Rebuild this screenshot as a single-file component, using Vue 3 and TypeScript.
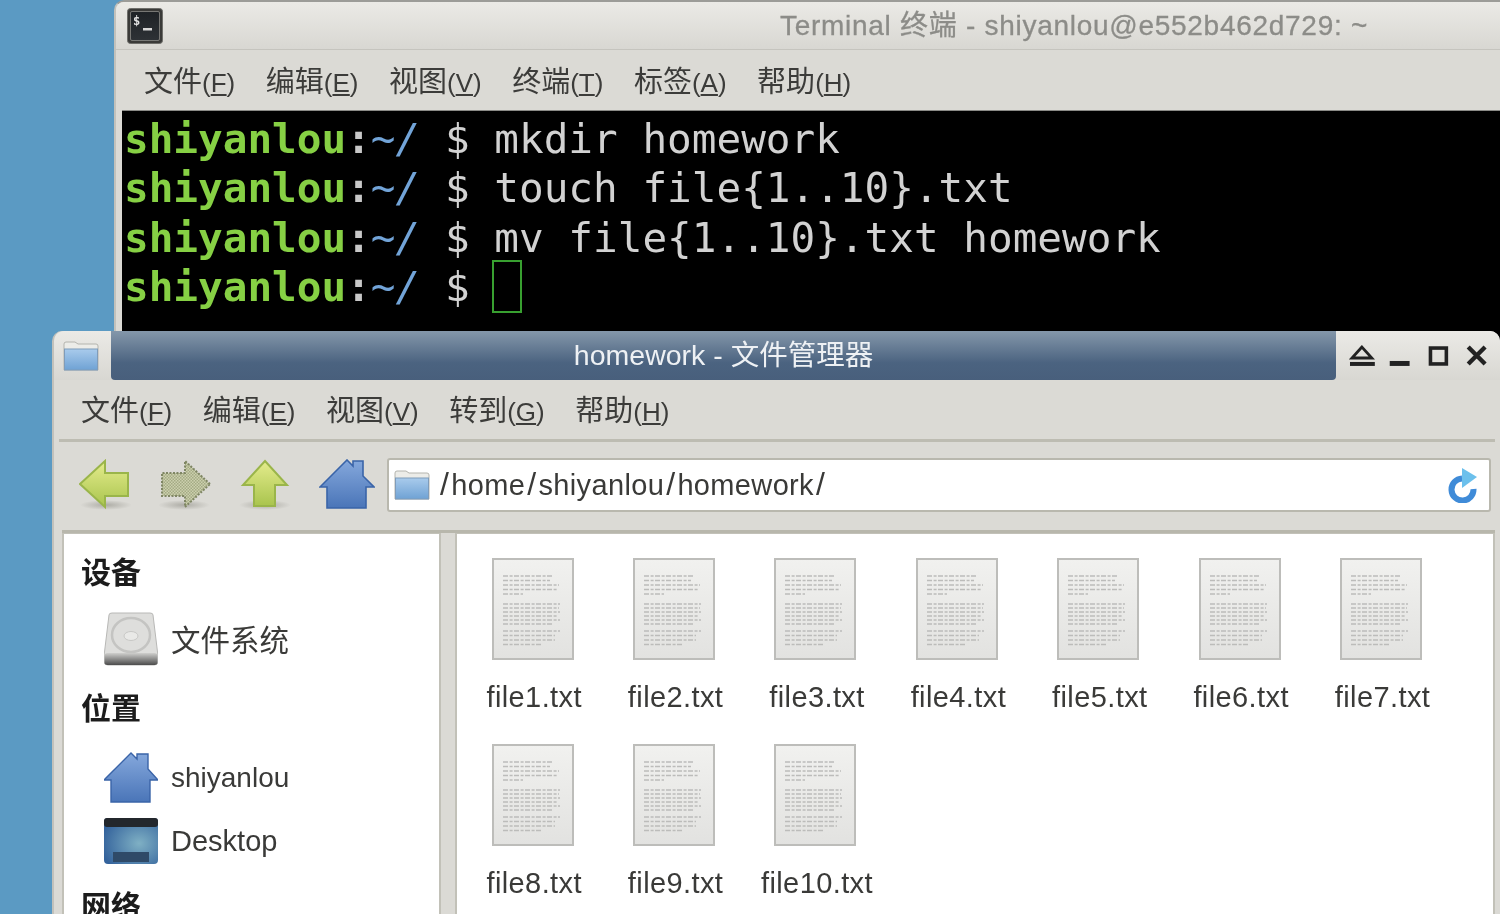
<script setup lang="ts">
interface MenuItem { label: string; key: string }

const termMenu: MenuItem[] = [
  { label: '文件', key: 'F' },
  { label: '编辑', key: 'E' },
  { label: '视图', key: 'V' },
  { label: '终端', key: 'T' },
  { label: '标签', key: 'A' },
  { label: '帮助', key: 'H' },
]
const fmMenu: MenuItem[] = [
  { label: '文件', key: 'F' },
  { label: '编辑', key: 'E' },
  { label: '视图', key: 'V' },
  { label: '转到', key: 'G' },
  { label: '帮助', key: 'H' },
]
const commands = ['mkdir homework', 'touch file{1..10}.txt', 'mv file{1..10}.txt homework', '']
const pathParts = ['home', 'shiyanlou', 'homework']
const files = Array.from({ length: 10 }, (_, i) => `file${i + 1}.txt`)
const docLines: { y: number; w: number }[] = [
  { y: 18, w: 49 }, { y: 22.5, w: 47 }, { y: 27, w: 56 }, { y: 31.5, w: 54 }, { y: 36, w: 20 },
  { y: 46, w: 57 }, { y: 50, w: 56 }, { y: 54, w: 57 }, { y: 58, w: 54 }, { y: 62, w: 57 }, { y: 66, w: 50 },
  { y: 73, w: 57 }, { y: 77.5, w: 52 }, { y: 82, w: 52 }, { y: 86.5, w: 38 },
]
</script>

<template>
  <div class="screen">
    <div class="desktop">
      <section class="window terminal">
        <header class="term-title">
          <div class="term-icon">
            <svg viewBox="0 0 36 36" width="36" height="36">
              <rect x="0.5" y="0.5" width="35" height="35" rx="3" fill="#3a3a38" stroke="#6e6e6a" />
              <rect x="3.5" y="3.5" width="29" height="29" rx="1.5" fill="url(#termface)" stroke="#8a8a86" stroke-width="0.8" />
              <text x="6" y="17" font-family="DejaVu Sans Mono" font-size="12" font-weight="700" fill="#e4e4e4">$</text>
              <rect x="16" y="20" width="9" height="2.5" fill="#d8d8d8" />
            </svg>
          </div>
          <div class="term-caption">Terminal 终端 - shiyanlou@e552b462d729: ~</div>
          <div></div>
        </header>
        <nav class="menubar term-menu">
          <span v-for="m in termMenu" :key="m.label" class="menu-item">{{ m.label }}<span class="menu-key">(<u>{{ m.key }}</u>)</span></span>
        </nav>
        <div class="term-body">
          <div v-for="(c, i) in commands" :key="i" class="term-line">
            <span class="p-user">shiyanlou</span><span class="p-colon">:</span><span class="p-path">~/</span><span class="p-cmd"> $ {{ c }}</span><span v-if="i === 3" class="cursor"></span>
          </div>
        </div>
      </section>

      <section class="window fm">
        <header class="fm-title">
          <div class="fm-icon">
            <svg viewBox="0 0 36 30" width="36" height="30">
              <path d="M1 3 Q1 1 3 1 L12 1 L15 3 L33 3 Q35 3 35 5 L35 29 L1 29 Z" fill="#ecece8" stroke="#b4b4ae" />
              <rect x="1.5" y="8" width="33" height="21" fill="url(#folder)" stroke="#7f9cba" />
            </svg>
          </div>
          <div class="fm-caption">homework - 文件管理器</div>
          <div class="fm-btns">
            <svg viewBox="0 0 152 30" width="152" height="30">
              <path d="M13 6 L3 17 L23 17 Z" fill="none" stroke="#222" stroke-width="2.8" />
              <rect x="1" y="21" width="25" height="4" fill="#222" />
              <rect x="41" y="20" width="20" height="5" fill="#222" />
              <rect x="82" y="7" width="16" height="16" fill="none" stroke="#222" stroke-width="3.6" />
              <path d="M120 6 L137 23 M137 6 L120 23" stroke="#222" stroke-width="4.4" />
            </svg>
          </div>
        </header>
        <nav class="menubar fm-menu">
          <span v-for="m in fmMenu" :key="m.label" class="menu-item">{{ m.label }}<span class="menu-key">(<u>{{ m.key }}</u>)</span></span>
        </nav>
        <div class="toolbar">
          <svg class="tool" viewBox="0 0 52 52" width="52" height="52">
            <ellipse cx="27" cy="46" rx="26" ry="5" fill="url(#shade)" />
            <path d="M1 25 L26 2 L26 14 L49 14 L49 37 L26 37 L26 48 Z" fill="url(#lime)" stroke="#9ab54a" stroke-width="2" />
          </svg>
          <svg class="tool" viewBox="0 0 52 52" width="52" height="52">
            <ellipse cx="25" cy="46" rx="26" ry="5" fill="url(#shade)" />
            <path d="M51 25 L26 2 L26 14 L3 14 L3 37 L26 37 L26 48 Z" fill="url(#dither)" stroke="#7f8664" stroke-width="2" stroke-dasharray="2 1.5" />
          </svg>
          <svg class="tool" viewBox="0 0 52 52" width="52" height="52">
            <ellipse cx="26" cy="46" rx="26" ry="5" fill="url(#shade)" />
            <path d="M26 2 L48 26 L36 26 L36 47 L15 47 L15 26 L4 26 Z" fill="url(#lime)" stroke="#9ab54a" stroke-width="2" />
          </svg>
          <svg class="tool" viewBox="0 0 56 52" width="56" height="52">
            <path d="M1 28 L28 1 L34 7 L34 2 L44 2 L44 17 L55 28 L47 28 L47 49 L8 49 L8 28 Z" fill="url(#house)" stroke="#3a64a8" stroke-width="1.6" />
          </svg>
          <div class="location">
            <svg viewBox="0 0 36 30" width="36" height="30">
              <path d="M1 3 Q1 1 3 1 L12 1 L15 3 L33 3 Q35 3 35 5 L35 29 L1 29 Z" fill="#ecece8" stroke="#b4b4ae" />
              <rect x="1.5" y="8" width="33" height="21" fill="url(#folder)" stroke="#7f9cba" />
            </svg>
            <span class="path"><i class="slash">/</i><template v-for="p in pathParts" :key="p">{{ p }}<i class="slash">/</i></template></span>
            <svg class="reload" viewBox="0 0 32 36" width="32" height="36">
              <path d="M26.5 22 A11 11 0 1 1 15 11.5" fill="none" stroke="#3f8bd8" stroke-width="6" />
              <path d="M15 1 L30 10 L15 21 Z" fill="#6cc0ec" />
            </svg>
          </div>
        </div>
        <div class="panes">
          <aside class="sidebar">
            <h3>设备</h3>
            <div class="side-row fs-row">
              <svg viewBox="0 0 54 54" width="54" height="54">
                <path d="M5 3 Q5 1 8 1 L46 1 Q49 1 49 3 L54 44 L54 50 Q54 53 50 53 L4 53 Q0 53 0 50 L0 44 Z" fill="#dededc" stroke="#b8b8b6" />
                <rect x="0.5" y="41" width="53" height="12" rx="3" fill="url(#hdd)" />
                <ellipse cx="27" cy="23" rx="19" ry="17" fill="none" stroke="#c4c4c2" stroke-width="2.5" />
                <ellipse cx="27" cy="24" rx="7" ry="4.5" fill="#e9e9e7" stroke="#c8c8c6" />
              </svg>
              <span class="cjk">文件系统</span>
            </div>
            <h3 class="places">位置</h3>
            <div class="side-row home-row">
              <svg viewBox="0 0 54 52" width="54" height="52">
                <path d="M0 28 L27 1 L33 7 L33 2 L44 2 L44 17 L54 28 L46 28 L46 50 L7 50 L7 28 Z" fill="url(#house)" stroke="#3a64a8" stroke-width="1.4" />
              </svg>
              <span>shiyanlou</span>
            </div>
            <div class="side-row desk-row">
              <svg viewBox="0 0 54 46" width="54" height="46">
                <rect width="54" height="46" rx="4" fill="url(#desk)" />
                <rect width="54" height="9" rx="3" fill="#23272c" />
                <rect x="9" y="34" width="36" height="10" fill="#2f4a68" />
              </svg>
              <span class="wide">Desktop</span>
            </div>
            <h3 class="net">网络</h3>
          </aside>
          <div class="pane-handle"></div>
          <main class="files">
            <div v-for="f in files" :key="f" class="file">
              <svg viewBox="0 0 82 102" width="82" height="102">
                <rect x="1" y="1" width="80" height="100" fill="url(#paper)" stroke="#bdbdba" stroke-width="2" />
                <line v-for="(l, i) in docLines" :key="i" x1="11" :y1="l.y" :x2="11 + l.w" :y2="l.y" stroke="#bcbcba" stroke-width="1.5" stroke-dasharray="5 1.6 3 1.4" />
              </svg>
              <span class="file-name">{{ f }}</span>
            </div>
          </main>
        </div>
      </section>

      <svg class="defs" width="0" height="0">
        <defs>
          <linearGradient id="lime" x1="0" y1="0" x2="0" y2="1">
            <stop offset="0" stop-color="#e4ec8c" />
            <stop offset="1" stop-color="#a9c44e" />
          </linearGradient>
          <linearGradient id="termface" x1="0" y1="0" x2="0" y2="1">
            <stop offset="0" stop-color="#1e2226" />
            <stop offset="1" stop-color="#2e3236" />
          </linearGradient>
          <linearGradient id="folder" x1="0" y1="0" x2="0" y2="1">
            <stop offset="0" stop-color="#a9cbec" />
            <stop offset="1" stop-color="#6fa2d4" />
          </linearGradient>
          <radialGradient id="shade">
            <stop offset="0" stop-color="#a8a7a0" stop-opacity=".9" />
            <stop offset="1" stop-color="#a8a7a0" stop-opacity="0" />
          </radialGradient>
          <pattern id="dither" width="3" height="3" patternUnits="userSpaceOnUse">
            <rect width="3" height="3" fill="#ccd0ae" />
            <rect width="1.5" height="1.5" fill="#a4ab84" />
            <rect x="1.5" y="1.5" width="1.5" height="1.5" fill="#a4ab84" />
          </pattern>
          <linearGradient id="house" x1="0" y1="0" x2="0" y2="1">
            <stop offset="0" stop-color="#85a8dc" />
            <stop offset="1" stop-color="#4a75b8" />
          </linearGradient>
          <linearGradient id="hdd" x1="0" y1="0" x2="0" y2="1">
            <stop offset="0" stop-color="#cfcfcd" />
            <stop offset="1" stop-color="#4c4c4c" />
          </linearGradient>
          <radialGradient id="desk" cx=".65" cy=".55" r=".7">
            <stop offset="0" stop-color="#7fb0c4" />
            <stop offset="1" stop-color="#34639c" />
          </radialGradient>
          <linearGradient id="paper" x1="0" y1="0" x2="0" y2="1">
            <stop offset="0" stop-color="#f1f1ef" />
            <stop offset="1" stop-color="#e2e2e0" />
          </linearGradient>
        </defs>
      </svg>
    </div>
  </div>
</template>

<style>
html, body { margin: 0; padding: 0; overflow: hidden; }
</style>

<style scoped>
.screen {
  width: 1500px;
  height: 914px;
  overflow: hidden;
}
.desktop {
  position: relative;
  width: 1520px;
  height: 934px;
  margin: -10px;
  overflow: hidden;
  background: #5b9ac3;
  font-family: "Liberation Sans", "Noto Sans CJK SC", sans-serif;
  filter: blur(0.75px);
}
.defs { position: absolute; }
.window {
  position: absolute;
  background: #dbdad5;
  box-sizing: border-box;
}
.terminal {
  left: 124px;
  top: 10px;
  width: 1918px;
  height: 340px;
  border-radius: 10px 0 0 0;
  border-top: 2px solid #9c9c98;
  border-left: 2px solid #c2c1bb;
  display: flex;
  flex-direction: column;
}
.term-title {
  height: 48px;
  flex: none;
  display: grid;
  grid-template-columns: 1fr auto 1fr;
  align-items: center;
  padding-left: 11px;
  padding-right: 11px;
  background: linear-gradient(#ebeae6, #d8d7d2);
  border-bottom: 1px solid #c5c4be;
  border-radius: 8px 0 0 0;
  box-sizing: border-box;
}
.term-icon { display: flex; }
.term-caption {
  font-size: 28px;
  color: #8c8c88;
  letter-spacing: 0.72px;
  white-space: nowrap;
  padding-bottom: 5px;
  -webkit-text-stroke: 0.3px #8c8c88;
}
.menubar {
  display: flex;
  flex: none;
  align-items: center;
  gap: 30.5px;
  font-size: 29px;
  color: #3c3c3a;
  padding-bottom: 3px;
}
.menu-item { white-space: nowrap; }
.menu-key { font-size: 26px; }
.term-menu { height: 60px; padding-left: 28px; box-sizing: border-box; }
.term-body {
  flex: 1;
  margin-left: 6px;
  background: #000;
  padding: 4px 0 0 2px;
  border-top: 1px solid #8a8a86;
  font-family: "DejaVu Sans Mono", monospace;
  font-size: 41px;
  line-height: 49.3px;
  color: #d2d2d2;
}
.term-line { display: flex; align-items: center; white-space: pre; height: 49.3px; }
.p-user { color: #86d044; font-weight: 700; }
.p-colon { color: #c8c8c8; font-weight: 700; }
.p-path { color: #72a4d8; font-style: italic; font-weight: 400; }
.cursor {
  display: block;
  flex: none;
  width: 30px;
  height: 53px;
  margin: -2px 0 0 -2px;
  border: 2px solid #38a030;
  box-sizing: border-box;
}

.fm {
  left: 62px;
  top: 341px;
  width: 1448px;
  height: 593px;
  border-radius: 10px 10px 0 0;
  border-left: 2px solid #c2c1bb;
  display: flex;
  flex-direction: column;
}
.fm-title {
  height: 49px;
  flex: none;
  display: flex;
  align-items: stretch;
  background: linear-gradient(#ebeae6, #d8d7d2);
  border-radius: 10px 10px 0 0;
}
.fm-icon { width: 57px; flex: none; display: flex; align-items: center; padding-left: 9px; box-sizing: border-box; }
.fm-caption {
  flex: 1;
  display: flex;
  align-items: center;
  justify-content: center;
  background: linear-gradient(#8497aa, #4b6380 65%, #485f7c);
  border-radius: 0 0 4px 4px;
  color: #eef1f4;
  font-size: 28.5px;
  padding-bottom: 6px;
  box-sizing: border-box;
}
.fm-btns { width: 164px; flex: none; display: flex; align-items: center; padding-left: 13px; box-sizing: border-box; }
.fm-menu {
  height: 62px;
  box-sizing: border-box;
  margin: 0 5px;
  padding-left: 22px;
  border-bottom: 3px solid #bdbcb2;
}
.toolbar {
  height: 86px;
  flex: none;
  display: flex;
  align-items: center;
  padding: 0 9px 0 25px;
  box-sizing: border-box;
}
.tool { flex: none; margin-right: 28px; }
.tool:nth-child(4) { margin-right: 12px; }
.location {
  flex: 1;
  height: 54px;
  display: flex;
  align-items: center;
  gap: 8px;
  padding: 0 10px 0 5px;
  background: #fff;
  border: 2px solid #b9b8ae;
  border-radius: 3px;
  box-sizing: border-box;
}
.path { flex: 1; font-size: 29px; letter-spacing: 0.35px; color: #3a3a38; white-space: nowrap; }
.slash { font-style: normal; font-size: 32px; line-height: 28px; margin: 0 2px; }
.reload { flex: none; }
.panes {
  flex: 1;
  display: flex;
  margin: 2px 5px 0 8px;
  border-top: 3px solid #b8b7ac;
  min-height: 0;
}
.sidebar {
  width: 379px;
  flex: none;
  background: #fff;
  border: 2px solid #c2c1b8;
  border-width: 1px 2px 0;
  padding: 21px 0 0 17px;
  box-sizing: border-box;
  color: #3a3a38;
}
.sidebar h3 {
  margin: 0;
  font-size: 30px;
  line-height: 36px;
  color: #1c1c1c;
  font-weight: 700;
}
.side-row { display: flex; align-items: center; gap: 13px; padding-left: 23px; font-size: 28px; }
.cjk { font-size: 29.5px; padding-bottom: 2px; }
.wide { font-size: 29px; }
.fs-row { margin-top: 21px; }
.sidebar .places { margin-top: 25px; }
.home-row { margin-top: 25px; }
.desk-row { margin-top: 14px; }
.sidebar .net { margin-top: 25px; }
.pane-handle { width: 14px; flex: none; }
.files {
  flex: 1;
  background: #fff;
  border: 2px solid #c2c1b8;
  border-width: 1px 2px 0;
  padding: 24px 0 0 5px;
  box-sizing: border-box;
  display: grid;
  grid-template-columns: repeat(7, 141.4px);
  grid-auto-rows: 186px;
  align-content: start;
}
.file {
  display: flex;
  flex-direction: column;
  align-items: center;
  gap: 21px;
}
.file-name { font-size: 29px; line-height: 32px; letter-spacing: 0.4px; padding-left: 3px; color: #3a3a38; }
</style>
